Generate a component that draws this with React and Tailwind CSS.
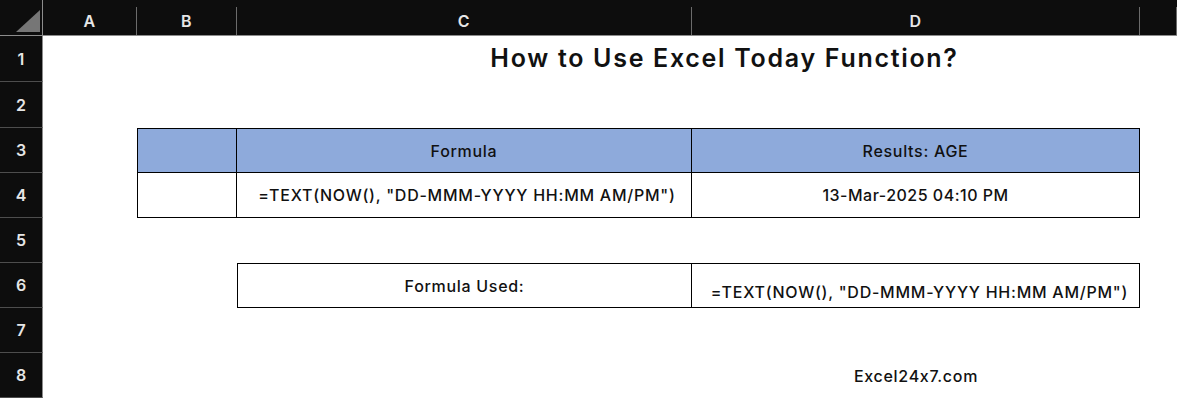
import React from 'react';

const cols = ['A', 'B', 'C', 'D', ''];
const font = { fontFamily: 'Inter, "Noto Sans", sans-serif' };

const ColHead = ({ label }) => (
    <div className="bg-[#0d0d0d] border-b border-[#8c8c8c] flex flex-col pt-[7px]">
        <div className="flex-1 border-r border-[#6b6b6b] flex items-center justify-center text-[#e6e6e6] text-[16px] font-semibold tracking-[0.5px]">
            {label}
        </div>
    </div>
);

const RowHead = ({ n }) => (
    <div className="bg-[#0d0d0d] border-r border-[#8c8c8c] border-b border-b-[#4d4d4d] flex items-center justify-center text-[#e6e6e6] text-[16px] font-semibold">
        {n}
    </div>
);

export default function App() {
    return (
        <div className="w-[1177px] h-[399px] overflow-hidden bg-white text-[#111] [font-feature-settings:'calt'_0]" style={font}>
            <div className="grid grid-cols-[43px_94px_100px_455px_448px_1fr] grid-rows-[36px_46px_46px_45px_45px_45px_45px_45px_45px]">
                {/* corner */}
                <div className="bg-[#0d0d0d] border-r border-b border-[#8c8c8c] flex items-end justify-end pb-[3px] pr-[2px]">
                    <svg width="24" height="22" viewBox="0 0 24 22">
                        <polygon points="24,0 24,22 0,22" fill="#767676" />
                    </svg>
                </div>
                {cols.map((c, i) => <ColHead key={i} label={c} />)}

                {/* row 1 */}
                <RowHead n={1} />
                <div className="col-span-2" />
                <div className="col-span-2 flex items-center justify-center pl-[72px] text-[25px] font-semibold tracking-[1.7px] whitespace-nowrap">
                    How to Use Excel Today Function?
                </div>
                <div />

                {/* row 2 */}
                <RowHead n={2} />
                <div className="col-span-5" />

                {/* row 3 */}
                <RowHead n={3} />
                <div />
                <div className="bg-[#8eaadb] border border-black" />
                <div className="bg-[#8eaadb] border-t border-r border-b border-black flex items-center justify-center text-[16px] font-medium tracking-[0.7px]">
                    Formula
                </div>
                <div className="bg-[#8eaadb] border-t border-r border-b border-black flex items-center justify-center text-[16px] font-medium tracking-[0.7px]">
                    Results: AGE
                </div>
                <div />

                {/* row 4 */}
                <RowHead n={4} />
                <div />
                <div className="border-l border-r border-b border-black" />
                <div className="border-r border-b border-black flex items-center justify-center pl-[6px] text-[16px] font-medium tracking-[0.75px] whitespace-nowrap">
                    =TEXT(NOW(), "DD-MMM-YYYY HH:MM AM/PM")
                </div>
                <div className="border-r border-b border-black flex items-center justify-center text-[16px] font-medium tracking-[0.5px]">
                    13-Mar-2025 04:10 PM
                </div>
                <div />

                {/* row 5 */}
                <RowHead n={5} />
                <div className="col-span-5" />

                {/* row 6 */}
                <RowHead n={6} />
                <div className="col-span-2" />
                <div className="border border-black flex items-start justify-center pt-[10px] text-[16px] font-medium tracking-[0.7px]">
                    Formula Used:
                </div>
                <div className="border-t border-r border-b border-black flex items-end justify-center pl-[8px] pb-[3px] text-[16px] font-medium tracking-[0.75px] whitespace-nowrap">
                    =TEXT(NOW(), "DD-MMM-YYYY HH:MM AM/PM")
                </div>
                <div />

                {/* row 7 */}
                <RowHead n={7} />
                <div className="col-span-5" />

                {/* row 8 */}
                <RowHead n={8} />
                <div className="col-span-3" />
                <div className="flex items-center justify-center text-[16px] font-medium tracking-[0.7px]">
                    Excel24x7.com
                </div>
                <div />
            </div>
        </div>
    );
}
